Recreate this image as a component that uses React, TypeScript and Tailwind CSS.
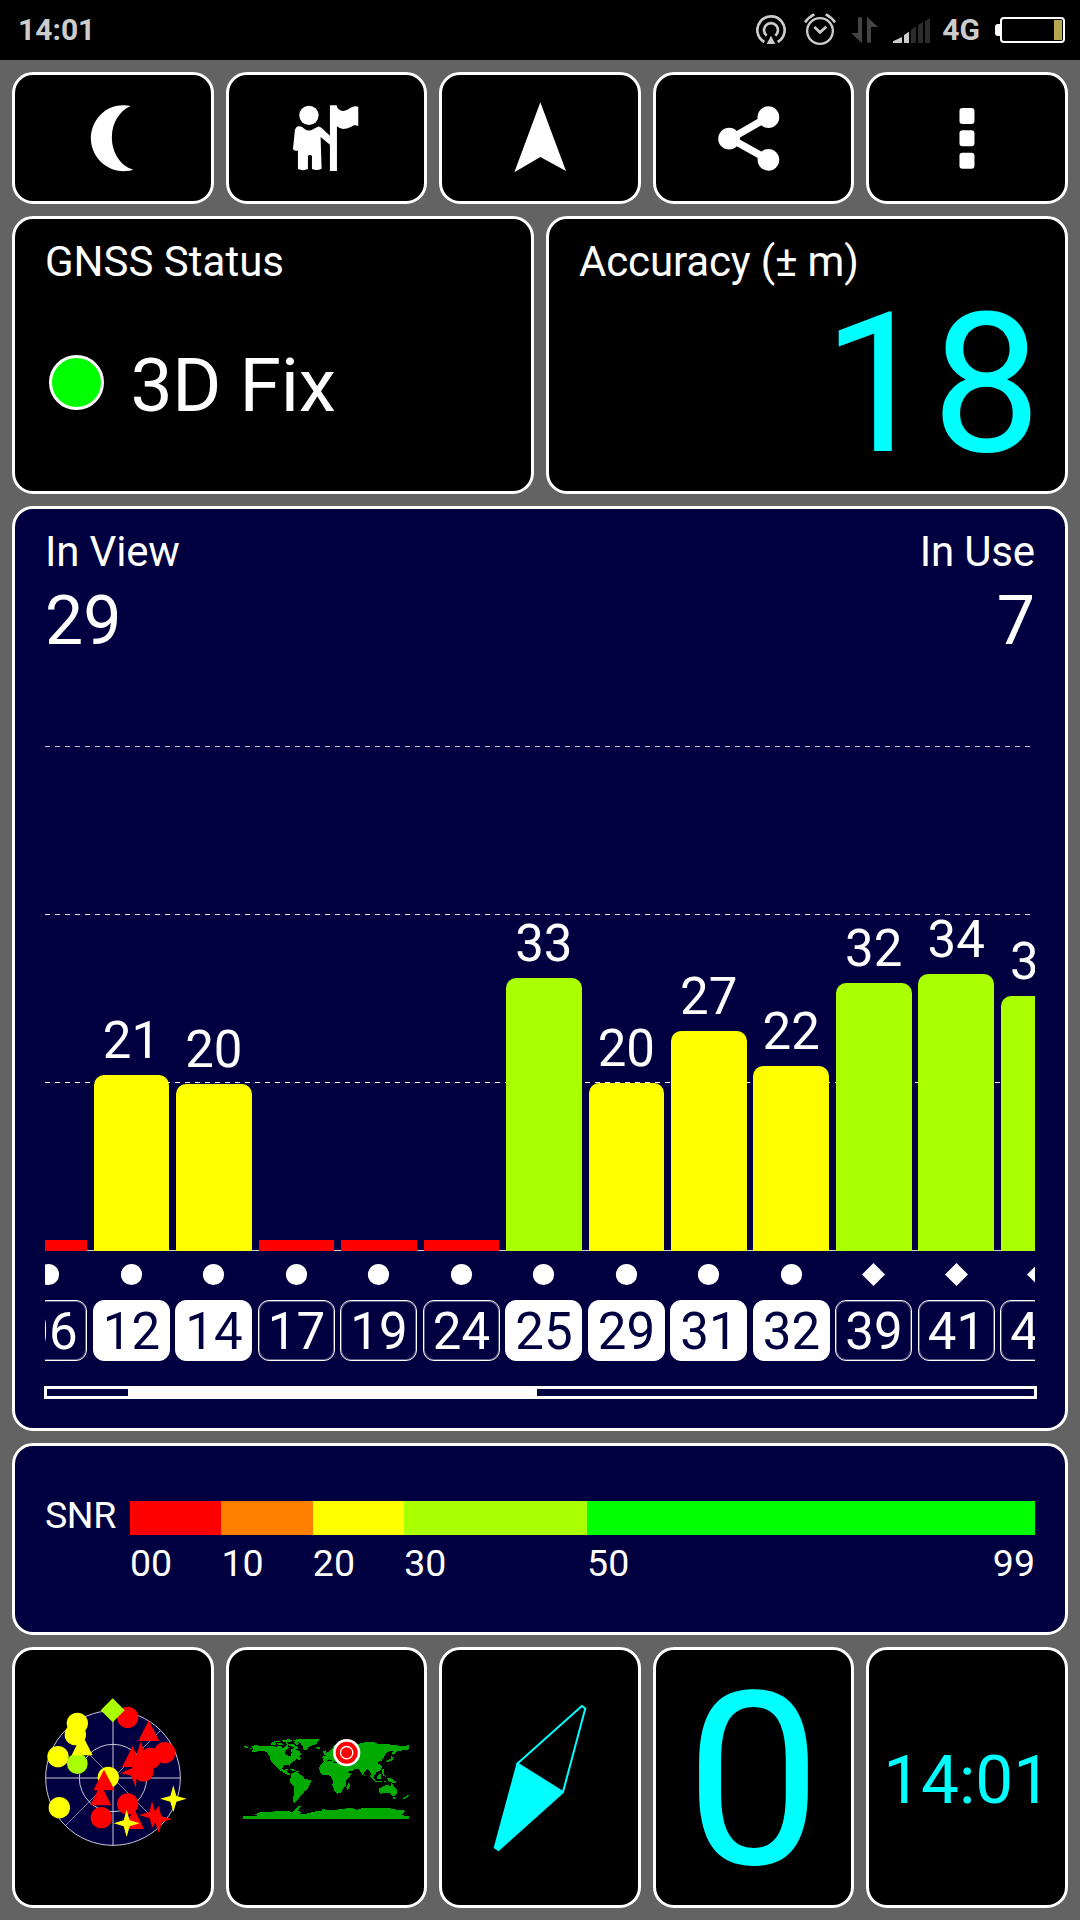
import type { ReactNode } from "react";
import { clsx } from "clsx";

type Shape = "circle" | "diamond";

interface Satellite {
  id: string;
  level: number;
  label?: string;
  tone: string;
  shape: Shape;
  used?: boolean;
}

const PX_PER_DB = 8.4;

const satellites: Satellite[] = [
  { id: "06", level: 1.3, tone: "bg-[#ff0000]", shape: "circle" },
  { id: "12", level: 20.9, label: "21", tone: "bg-[#ffff00]", shape: "circle", used: true },
  { id: "14", level: 19.85, label: "20", tone: "bg-[#ffff00]", shape: "circle", used: true },
  { id: "17", level: 1.3, tone: "bg-[#ff0000]", shape: "circle" },
  { id: "19", level: 1.3, tone: "bg-[#ff0000]", shape: "circle" },
  { id: "24", level: 1.3, tone: "bg-[#ff0000]", shape: "circle" },
  { id: "25", level: 32.45, label: "33", tone: "bg-[#aaff00]", shape: "circle", used: true },
  { id: "29", level: 19.95, label: "20", tone: "bg-[#ffff00]", shape: "circle", used: true },
  { id: "31", level: 26.2, label: "27", tone: "bg-[#ffff00]", shape: "circle", used: true },
  { id: "32", level: 22.05, label: "22", tone: "bg-[#ffff00]", shape: "circle", used: true },
  { id: "39", level: 31.95, label: "32", tone: "bg-[#aaff00]", shape: "diamond" },
  { id: "41", level: 33, label: "34", tone: "bg-[#aaff00]", shape: "diamond" },
  { id: "49", level: 30.4, label: "31", tone: "bg-[#aaff00]", shape: "diamond" },
];

const snrScale = [
  { label: "00", size: 10, tone: "bg-[#ff0000]" },
  { label: "10", size: 10, tone: "bg-[#ff8000]" },
  { label: "20", size: 10, tone: "bg-[#ffff00]" },
  { label: "30", size: 20, tone: "bg-[#aaff00]" },
  { label: "50", size: 49, tone: "bg-[#00ff00]", end: "99" },
];

function Panel({ className, children }: { className?: string; children: ReactNode }) {
  return (
    <div className={clsx("rounded-[21px] border-[3px] border-white", className)}>{children}</div>
  );
}

function Tile({ className, children }: { className?: string; children: ReactNode }) {
  return (
    <Panel className={clsx("flex min-w-0 flex-1 items-center justify-center bg-black", className)}>
      {children}
    </Panel>
  );
}

function StatusBar() {
  return (
    <div className="flex h-[60px] items-center bg-black pl-[18px] pr-[15px] font-bold text-[#cccccc]">
      <span className="text-[30px] leading-none">14:01</span>
      <div className="ml-auto flex items-center">
        <svg className="h-[60px] w-[30px]" viewBox="168 0 90 180" fill="none" stroke="#cccccc" strokeWidth="8">
          <path d="M193 126A41 41 0 1 1 233 126" />
          <path d="M200 107A21 21 0 1 1 226 107" />
          <path d="M213 107L226 132H200Z" fill="#cccccc" stroke="none" />
        </svg>
        <svg className="ml-[18px] h-[60px] w-8" viewBox="312 0 96 180" fill="none" stroke="#cccccc" strokeWidth="7">
          <circle cx="360" cy="93" r="38.5" />
          <path d="M343 81L360 97L379 80" strokeWidth="8" />
          <path d="M315 67Q326 51 343 43M405 67Q394 51 377 43" strokeWidth="8" />
        </svg>
        <svg className="ml-[15px] h-[60px] w-[27px]" viewBox="453 0 81 180" fill="#444444">
          <path d="M474 54Q480 48 486 54V130L453 99H474ZM501 50L534 81H513V126Q507 132 501 126Z" />
        </svg>
        <svg className="ml-[15px] h-[60px] w-[37px]" viewBox="579 0 111 180">
          <path d="M579 129V124L606 111V129ZM612 129V105L627 95V129Z" fill="#cccccc" />
          <path d="M633 129V90L648 79V129ZM654 129V75L669 67V129ZM675 129V63L690 54V129Z" fill="#2c2c2c" />
        </svg>
        <span className="ml-3 text-[30px] leading-none">4G</span>
        <div className="ml-[15px] h-3 w-[5px] rounded-l-[3px] bg-white" />
        <div className="flex h-[26px] w-[65px] justify-end rounded-[4px] border-2 border-white p-px">
          <div className="w-2 bg-[#b8a64d]" />
        </div>
      </div>
    </div>
  );
}

function Toolbar() {
  return (
    <div className="flex h-[132px] gap-3">
      <Tile>
        <svg className="size-[100px]" viewBox="190.4 264 300 300" fill="#fff">
          <path d="M394 318A98 99 0 1 0 401 509C365 499 337 461 337 412C337 369 360 332 394 318Z" />
        </svg>
      </Tile>
      <Tile>
        <svg className="size-[100px]" viewBox="829.2 264 300 300" fill="#fff">
          <circle cx="928" cy="346" r="29" />
          <path d="M898 379Q907 379 914 386Q928 397 943 386L955 380Q960 379 967 385L991 407V434L963 411L966 506Q952 514 937 507V467Q931 463 925 467V507Q910 514 895 507V452Q886 454 880 448L886 390Q889 380 898 379Z" />
          <path d="M991 316H1011Q1014 332 1031 333Q1044 331 1056 322Q1066 317 1076 320V378Q1065 373 1055 380Q1042 387 1030 387Q1017 384 1012 379V513H991Z" />
        </svg>
      </Tile>
      <Tile>
        <svg className="size-[100px]" viewBox="180 84 300 300" fill="#fff">
          <path d="M331 127L408 333L331 291L253 337Z" />
        </svg>
      </Tile>
      <Tile>
        <svg className="size-[100px]" viewBox="820.8 84 300 300" fill="#fff">
          <path d="M1014 171L901 236L1014 299" fill="none" stroke="#fff" strokeWidth="22" />
          <circle cx="896" cy="236" r="32.5" />
          <circle cx="1014" cy="171.5" r="32.5" />
          <circle cx="1014" cy="299.5" r="32.5" />
        </svg>
      </Tile>
      <Tile>
        <svg className="size-[100px]" viewBox="651.6 264 300 300" fill="#fff">
          <rect x="779" y="324" width="45" height="48" rx="9" />
          <rect x="779" y="391" width="45" height="48" rx="9" />
          <rect x="779" y="458" width="45" height="48" rx="9" />
        </svg>
      </Tile>
    </div>
  );
}

function SignalChart() {
  return (
    <Panel className="flex h-[925px] flex-col bg-[#000040] px-[30px] pt-[22px] leading-none">
      <div className="flex justify-between text-[42px] tracking-[-0.15px]">
        <span>In View</span>
        <span>In Use</span>
      </div>
      <div className="mt-[14px] flex justify-between text-[68px]">
        <span>29</span>
        <span>7</span>
      </div>

      <div className="overflow-hidden">
        <div className="relative h-[596px] border-b border-white/80">
          <div className="absolute inset-x-0 top-[91px] flex flex-col gap-[167px]">
            <div className="h-px bg-[repeating-linear-gradient(90deg,#c4c4d0_0_5px,transparent_5px_10px)]" />
            <div className="h-px bg-[repeating-linear-gradient(90deg,#dcdce4_0_5px,transparent_5px_10px)]" />
            <div className="h-px bg-[repeating-linear-gradient(90deg,#fff_0_5px,transparent_5px_10px)]" />
          </div>
          <div className="relative -ml-[33.9px] flex h-[596px] items-end gap-[6.9px]">
            {satellites.map((sat) => (
              <div key={sat.id} className="w-[75.6px] shrink-0">
                {sat.label && <div className="pb-[9px] text-center text-[51px]">{sat.label}</div>}
                <div
                  className={clsx(sat.tone, sat.label && "rounded-t-[10px]")}
                  style={{ height: sat.level * PX_PER_DB }}
                />
              </div>
            ))}
          </div>
        </div>

        <div className="-ml-[34.6px] mt-[13px] flex gap-[5.5px]">
          {satellites.map((sat) => (
            <div key={sat.id} className="flex w-[77px] shrink-0 flex-col items-center gap-[15px]">
              <svg className="h-[21px] w-[23px] overflow-visible" viewBox="0 0 23 21" fill="#fff">
                {sat.shape === "circle" ? (
                  <circle cx="11.5" cy="10.5" r="10.6" />
                ) : (
                  <path d="M11.5 -1L23 10.5L11.5 22L0 10.5Z" />
                )}
              </svg>
              <div
                className={clsx(
                  "flex h-[61px] w-full items-center justify-center rounded-[11px] border border-white pt-px text-[51px] shadow-[inset_0_0_0_1px_rgba(255,255,255,0.35)]",
                  sat.used && "bg-white text-[#000040]"
                )}
              >
                {sat.id}
              </div>
            </div>
          ))}
        </div>
      </div>

      <div className="-ml-px -mr-[2px] mt-[25px] flex h-[13px] border-[3px] border-white">
        <div className="ml-[81px] w-[409px] bg-white" />
      </div>
    </Panel>
  );
}

function SnrLegend() {
  return (
    <Panel className="flex h-[192px] bg-[#000040] px-[30px] pt-[50px] text-[37.5px] leading-none">
      <div className="w-[85px] pt-px tracking-[-0.4px]">SNR</div>
      <div className="flex flex-1 pt-[5px]">
        {snrScale.map((step) => (
          <div key={step.label} className="min-w-0" style={{ flexGrow: step.size, flexBasis: 0 }}>
            <div className={clsx("h-[34px]", step.tone)} />
            <div className="flex justify-between pt-[10px]">
              <span>{step.label}</span>
              {step.end && <span>{step.end}</span>}
            </div>
          </div>
        ))}
      </div>
    </Panel>
  );
}

function SkyPlot() {
  return (
    <svg className="size-[170px] shrink-0" viewBox="-6 8 510 510">
      <g fill="none" stroke="#c8c8d8" strokeWidth="3">
        <circle cx="249" cy="263" r="202" fill="#000040" />
        <circle cx="249" cy="263" r="101" />
        <path d="M249 61V465M47 263H451" />
        <path d="M106 406L392 120M106 120L392 406" strokeWidth="2" />
      </g>
      <g fill="#ff0000">
        <circle cx="293" cy="81" r="32" />
        <path d="M356 90L388 152H325ZM308 167L334 230H276Z" />
        <path d="M333 152L342 184L372 182L350 204L360 240L320 244L318 292L303 256L272 248L306 234Z" />
        <circle cx="404" cy="187" r="32" />
        <circle cx="361" cy="204" r="32" />
        <circle cx="340" cy="243" r="31" />
        <circle cx="293" cy="341" r="32" />
        <circle cx="214" cy="382" r="32" />
        <path d="M312 354L342 416H283Z" />
        <path d="M366 333L375 363L386 346L394 378L426 386L396 396L386 428L376 396L367 413L359 384L327 374L358 365Z" />
      </g>
      <g fill="#ffff00">
        <circle cx="142" cy="99" r="32" />
        <circle cx="136" cy="133" r="32" />
        <circle cx="84" cy="199" r="32" />
        <circle cx="88" cy="352" r="32" />
        <circle cx="235" cy="261" r="32" />
      </g>
      <circle cx="142" cy="220" r="31" fill="#aaff00" />
      <path d="M156 132L188 195H125Z" fill="#ffff00" />
      <path d="M248 24L284 60L248 96L212 60Z" fill="#aaff00" />
      <path d="M222 238L254 300H190ZM212 282L244 345H181Z" fill="#ff0000" />
      <path d="M290 358L299 390L329 399L299 408L290 440L281 408L251 399L281 390ZM430 285L439 317L470 325L439 334L430 366L421 334L390 325L421 317Z" fill="#ffff00" />
    </svg>
  );
}

function WorldMap() {
  return (
    <svg className="h-[120px] w-[190px] shrink-0" viewBox="2 -6 570 360">
      <g fill="#00aa00" shapeRendering="crispEdges">
        {/* north america and the arctic islands */}
        <path d="M63 80L75 75L96 79L120 78L138 80L150 78L158 84L166 78L172 74L176 84L168 90L162 96L168 104L180 110L184 98L182 88L192 84L200 90L208 94L212 104L204 110L214 116L206 120L198 117L190 124L182 130L178 138L170 134L158 138L156 146L162 152L168 146L172 148L170 156L178 160L182 166L174 166L160 158L150 152L142 146L134 136L126 128L120 120L118 108L110 98L98 92L84 92L74 97L62 94L70 88Z" />
        <path d="M121 68L134 66L138 74L124 76ZM140 68H154L160 76L144 76ZM132 62H148V65H132ZM152 62L172 58L186 59L180 66L168 68L160 66ZM168 70L188 72L200 80L204 86L194 86L184 78L172 76ZM190 68L200 66L206 72L198 76ZM39 80L48 78L54 83H44ZM58 84H64V87H58Z" />
        <path d="M184 60L212 57H268L264 64L258 72L246 76L234 82L228 91L220 88L216 78L210 68L198 66Z" />
        <path d="M176 146L192 148L196 153H186ZM198 152L208 152L206 156H198Z" />
        {/* south america */}
        <path d="M184 160L196 156L208 162L218 168L222 176L240 180L243 186L236 196L232 208L222 214L216 224L208 230L204 238L198 244L194 249L187 246L189 230L192 214L190 200L180 188L177 180L182 172Z" />
        {/* europe and africa */}
        <path d="M256 80H270V87H260ZM279 93L286 91L290 103L280 105ZM276 110L288 108L286 101L296 94L304 86L310 78L326 68L340 66V130L322 128L310 124L298 118L290 122H278Z" />
        <path d="M280 124L304 122L312 128L330 130L340 134L346 148L354 158L362 160L358 170L348 182L346 198L338 206L332 218L320 221L312 212L306 196L308 182L302 170L292 164L278 166L268 156L267 142L272 134ZM354 190L360 192L356 206L350 210L348 202Z" />
        {/* asia */}
        <path d="M338 66L358 76L380 72L392 70L410 65L430 66L442 72L464 73L490 74L510 78L537 76V88L524 90L512 92L500 94L494 102L488 106L484 98L490 92L478 94L466 100L462 110L456 118L452 126L448 122L442 130L452 136L456 142L448 152L438 156L434 164L428 172L422 164L418 154L412 148L402 156L398 166L392 158L386 148L376 146L366 152L352 156L344 146L340 136L352 132L334 124Z" />
        <path d="M484 108L490 112L488 120L476 125H468L470 120L480 117ZM420 164L432 176L436 184L428 180L420 170ZM440 168L450 160L454 168L450 178L440 176ZM454 148H460V160L466 170L460 168L454 158ZM434 184H456V187H434ZM460 182H468V185H460ZM470 174L484 176L496 184L498 190L486 188L476 184ZM400 164H404V169H400Z" />
        {/* oceania */}
        <path d="M447 204L458 200L466 194L474 196L480 198L484 189L490 198L500 208L501 220L492 230L484 226L476 218L464 218L450 222L447 214ZM488 232H494V237H490ZM530 224L536 226L530 233L520 238L519 234L526 231Z" />
        {/* antarctica */}
        <path d="M39 288H84L72 284L88 276L120 276L150 272L176 274L188 276L196 268L200 260L212 258L208 264L204 272L212 276L208 282L236 280L244 276L274 272L276 268L310 270L346 266L362 263L380 270L388 266L410 264H480L488 268L522 270L524 276L516 284L524 288H537V297H39Z" />
      </g>
      <circle cx="349" cy="98" r="41" fill="#fff" />
      <circle cx="349" cy="98" r="33" fill="#ff0000" />
      <circle cx="349" cy="98" r="18.5" fill="none" stroke="#fff" strokeWidth="4" />
    </svg>
  );
}

function BottomTiles() {
  return (
    <div className="flex h-[261px] gap-3 text-[#00ffff]">
      <Tile>
        <SkyPlot />
      </Tile>
      <Tile>
        <WorldMap />
      </Tile>
      <Tile>
        <svg className="h-[160px] w-[100px] shrink-0" viewBox="490 1697.5 100 160">
          <path d="M516.5 1763L563.5 1792.5L498.6 1850.8L493.6 1847.5Z" fill="#00ffff" />
          <path d="M517.5 1763L581.8 1705.5L585.3 1708L563 1791.5Z" fill="none" stroke="#00ffff" strokeWidth="2" />
        </svg>
      </Tile>
      <Tile className="pt-[7px] text-[242px] leading-none">0</Tile>
      <Tile className="pt-1 text-[67.5px] leading-none">14:01</Tile>
    </div>
  );
}

export default function App() {
  return (
    <div className="flex h-[1920px] w-[1080px] flex-col overflow-hidden bg-[#636363] font-[Roboto,sans-serif] text-white">
      <StatusBar />
      <div className="flex flex-col gap-3 p-3">
        <Toolbar />
        <div className="flex h-[278px] gap-3">
          <Panel className="flex-1 bg-black px-[30px] pt-[22px] leading-none">
            <div className="text-[42px]">GNSS Status</div>
            <div className="mt-[65px] flex items-center gap-[27px]">
              <div className="mb-[7px] ml-[3.5px] size-[55px] rounded-full border-[3px] border-white bg-[#00ff00]" />
              <div className="text-[75px] tracking-[-0.3px]">3D Fix</div>
            </div>
          </Panel>
          <Panel className="flex-1 bg-black px-[30px] pt-[22px] leading-none">
            <div className="text-[42px] tracking-[-0.15px]">Accuracy (± m)</div>
            <div className="-mr-[6px] mt-[5px] text-right text-[194.5px] text-[#00ffff]">18</div>
          </Panel>
        </div>
        <SignalChart />
        <SnrLegend />
        <BottomTiles />
      </div>
    </div>
  );
}
